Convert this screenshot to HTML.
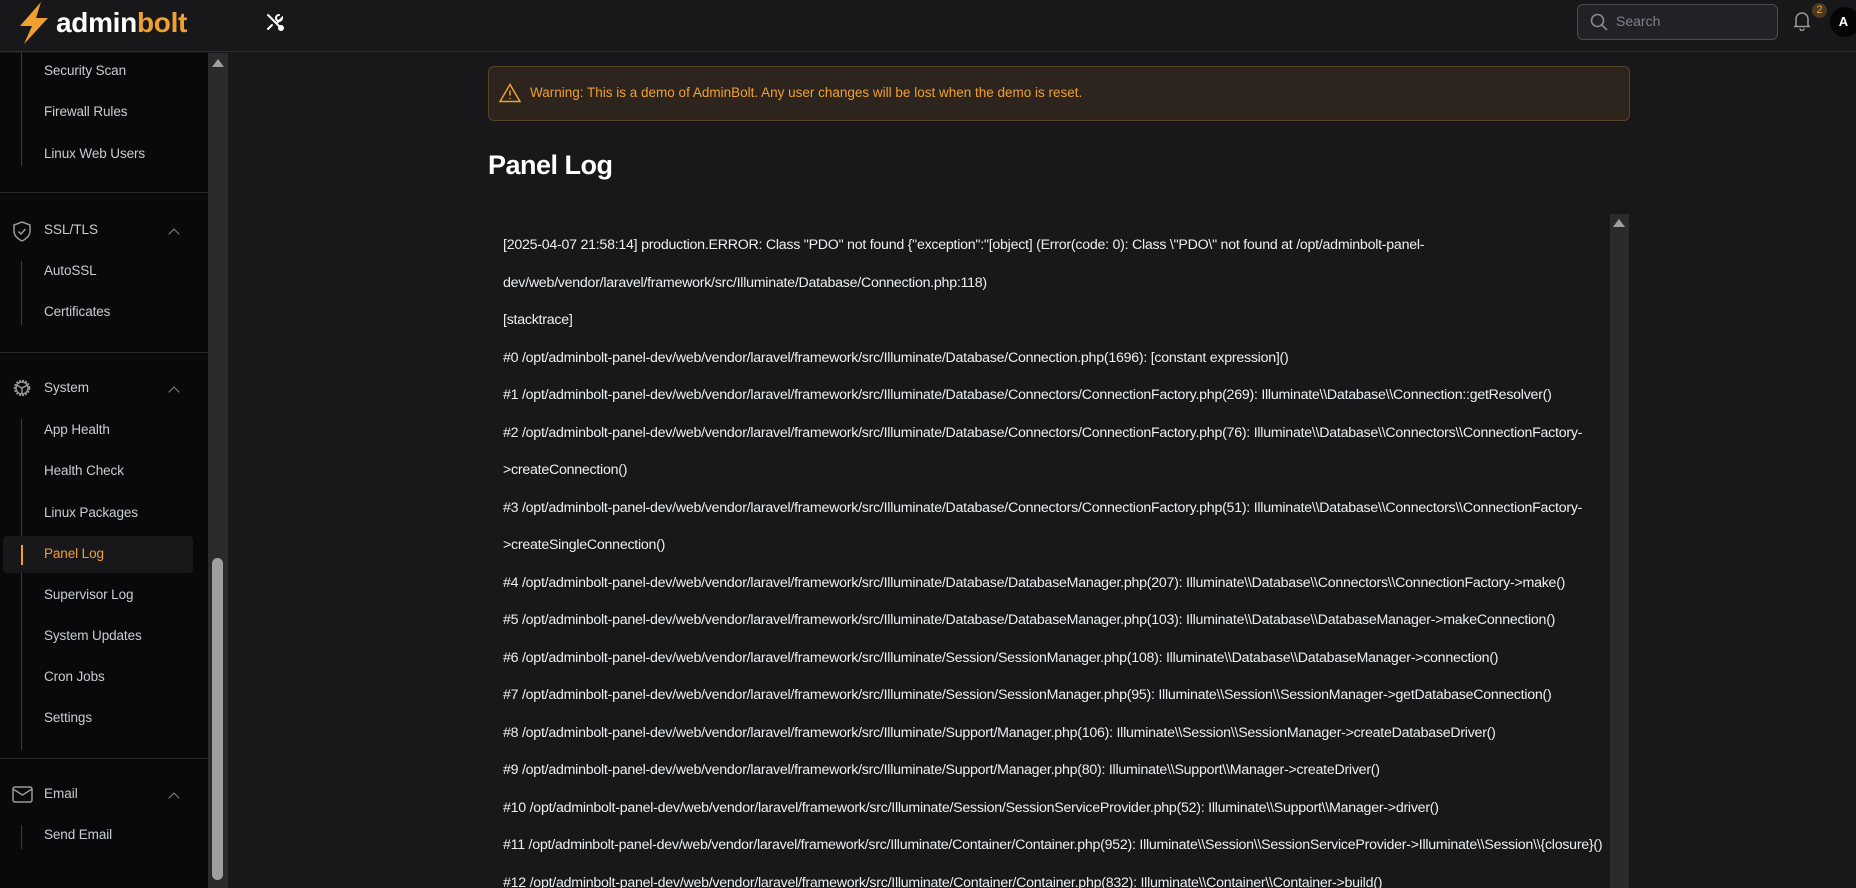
<!DOCTYPE html>
<html><head><meta charset="utf-8"><style>
*{box-sizing:border-box;margin:0;padding:0}
html,body{width:1856px;height:888px;overflow:hidden}
body{background:#18181b;font-family:"Liberation Sans",sans-serif;position:relative}
.hdr{position:absolute;left:0;top:0;width:1856px;height:52px;background:#18181b;border-bottom:1px solid #2e2e33}
.side{position:absolute;left:0;top:53px;width:208px;height:835px;background:#09090b}
.strk{position:absolute;left:208px;top:53px;width:20px;height:835px;background:#2b2b2b}
.thumb{position:absolute;left:212px;top:558px;width:11px;height:322px;background:#9f9f9f;border-radius:6px}
.tri{position:absolute;width:0;height:0;border-left:6px solid transparent;border-right:6px solid transparent;border-bottom:8px solid #a0a0a0}
.it{position:absolute;left:44px;font-size:13.5px;color:#c9ccd3;letter-spacing:-0.1px}
.grp{position:absolute;left:44px;font-size:13.5px;color:#c9ccd3}
.vl{position:absolute;left:21px;width:1px;background:#3a3a3f}
.hr{position:absolute;left:0;width:208px;height:1px;background:#26262b}
.chev{position:absolute;left:170px;width:8px;height:8px;border-left:1.5px solid #888;border-top:1.5px solid #888;transform:rotate(45deg)}
.log{position:absolute;left:503px;top:227px;font-size:14.2px;line-height:37.5px;color:#eceff3;white-space:nowrap;letter-spacing:-0.25px}
</style></head><body>
<div class="hdr">
<svg style="position:absolute;left:17px;top:2px" width="34" height="42" viewBox="0 0 34 42"><path d="M24 0 L3 24 L15 24 L7 42 L31 16 L19 16 Z" fill="#f0a030"/></svg>
<div style="position:absolute;left:56px;top:7px;font-size:28px;font-weight:bold;color:#fff;letter-spacing:-0.3px">admin<span style="color:#f0a030">bolt</span></div>
<svg style="position:absolute;left:265px;top:12px" width="20" height="20" viewBox="0 0 20 20" fill="none" stroke="#fff" stroke-width="2" stroke-linecap="round"><path d="M3 3 L17 17 M14 3 a3 3 0 1 0 3 3 L13 10 M3 17 l4-4"/><circle cx="16" cy="16" r="2"/></svg>
<div style="position:absolute;left:1577px;top:4px;width:201px;height:36px;border:1px solid #4a4a4f;border-radius:6px;background:#222226"></div>
<svg style="position:absolute;left:1590px;top:13px" width="18" height="18" viewBox="0 0 18 18" fill="none" stroke="#888" stroke-width="1.6"><circle cx="7.5" cy="7.5" r="6"/><path d="M12 12 L17 17"/></svg>
<div style="position:absolute;left:1616px;top:13px;font-size:14px;color:#7e8290">Search</div>
<svg style="position:absolute;left:1793px;top:11px" width="18" height="20" viewBox="0 0 18 20" fill="none" stroke="#999" stroke-width="1.5"><path d="M3 14 V8 a6 6 0 0 1 12 0 V14 L16 15.5 H2 Z M7 17.5 a2 2 0 0 0 4 0"/></svg>
<div style="position:absolute;left:1812px;top:3px;width:15px;height:15px;border-radius:50%;background:#4a3a22;color:#f0a030;font-size:11px;text-align:center;line-height:15px">2</div>
<div style="position:absolute;left:1830px;top:7px;width:30px;height:30px;border-radius:50%;background:#050505;color:#fff;font-size:13px;font-weight:bold;text-align:center;line-height:30px;text-indent:-3px">A</div>
</div>
<div class="side">
<div class="vl" style="top:0;height:113px"></div>
<div class="it" style="top:10px">Security Scan</div>
<div class="it" style="top:51px">Firewall Rules</div>
<div class="it" style="top:93px">Linux Web Users</div>
<div class="hr" style="top:139px"></div>
<svg style="position:absolute;left:12px;top:168px" width="20" height="21" viewBox="0 0 20 21" fill="none" stroke="#999" stroke-width="1.5"><path d="M10 1 L18 4 V10 C18 15 14 18 10 20 C6 18 2 15 2 10 V4 Z"/><path d="M6.5 10.5 L9 13 L13.5 8"/></svg>
<div class="grp" style="top:169px">SSL/TLS</div><div class="chev" style="top:177px"></div>
<div class="vl" style="top:208px;height:64px"></div>
<div class="it" style="top:210px">AutoSSL</div>
<div class="it" style="top:251px">Certificates</div>
<div class="hr" style="top:299px"></div>
<svg style="position:absolute;left:12px;top:325px" width="20" height="20" viewBox="0 0 20 20" fill="none" stroke="#999" stroke-width="1.5"><circle cx="10" cy="10" r="7.5" stroke-dasharray="2 1.2"/><circle cx="10" cy="10" r="6"/><path d="M10 10 L4.5 7 M10 10 L15.5 7 M10 10 V16"/></svg>
<div class="grp" style="top:327px">System</div><div class="chev" style="top:335px"></div>
<div class="vl" style="top:366px;height:331px"></div>
<div class="it" style="top:369px">App Health</div>
<div class="it" style="top:410px">Health Check</div>
<div class="it" style="top:452px">Linux Packages</div>
<div style="position:absolute;left:3px;top:483px;width:190px;height:37px;background:#18181b;border-radius:4px"></div>
<div style="position:absolute;left:21px;top:492px;width:2px;height:20px;background:#f0a030"></div>
<div class="it" style="top:493px;color:#f0a030">Panel Log</div>
<div class="it" style="top:534px">Supervisor Log</div>
<div class="it" style="top:575px">System Updates</div>
<div class="it" style="top:616px">Cron Jobs</div>
<div class="it" style="top:657px">Settings</div>
<div class="hr" style="top:705px"></div>
<svg style="position:absolute;left:12px;top:733px" width="21" height="17" viewBox="0 0 21 17" fill="none" stroke="#999" stroke-width="1.5"><rect x="1" y="1" width="19" height="15" rx="2"/><path d="M1 3 L10.5 9 L20 3"/></svg>
<div class="grp" style="top:733px">Email</div><div class="chev" style="top:741px"></div>
<div class="vl" style="top:772px;height:24px"></div>
<div class="it" style="top:774px">Send Email</div>
</div>
<div class="strk"></div><div class="tri" style="left:212px;top:59px"></div><div class="thumb"></div>
<div style="position:absolute;left:488px;top:66px;width:1142px;height:55px;background:#2d241e;border:1px solid #5a4428;border-radius:6px"></div>
<svg style="position:absolute;left:499px;top:83px" width="22" height="20" viewBox="0 0 22 20" fill="none" stroke="#f0a030" stroke-width="1.5"><path d="M11 1.5 L21 18.5 H1 Z M11 7.5 V12.5 M11 15 V16"/></svg>
<div style="position:absolute;left:530px;top:85px;font-size:13.5px;color:#f0a030">Warning: This is a demo of AdminBolt. Any user changes will be lost when the demo is reset.</div>
<div style="position:absolute;left:488px;top:150px;font-size:27px;font-weight:bold;color:#fff;letter-spacing:-0.5px">Panel Log</div>
<div style="position:absolute;left:488px;top:212px;width:1142px;height:676px;background:#18181b;overflow:hidden">
<div style="position:absolute;left:1122px;top:2px;width:19px;height:674px;background:#2b2b2b"></div>
<div class="tri" style="left:1125px;top:7px"></div>
</div>
<div class="log">
[2025-04-07 21:58:14] production.ERROR: Class "PDO" not found {"exception":"[object] (Error(code: 0): Class \"PDO\" not found at /opt/adminbolt-panel-<br>
dev/web/vendor/laravel/framework/src/Illuminate/Database/Connection.php:118)<br>
[stacktrace]<br>
#0 /opt/adminbolt-panel-dev/web/vendor/laravel/framework/src/Illuminate/Database/Connection.php(1696): [constant expression]()<br>
#1 /opt/adminbolt-panel-dev/web/vendor/laravel/framework/src/Illuminate/Database/Connectors/ConnectionFactory.php(269): Illuminate\\Database\\Connection::getResolver()<br>
#2 /opt/adminbolt-panel-dev/web/vendor/laravel/framework/src/Illuminate/Database/Connectors/ConnectionFactory.php(76): Illuminate\\Database\\Connectors\\ConnectionFactory-<br>
&gt;createConnection()<br>
#3 /opt/adminbolt-panel-dev/web/vendor/laravel/framework/src/Illuminate/Database/Connectors/ConnectionFactory.php(51): Illuminate\\Database\\Connectors\\ConnectionFactory-<br>
&gt;createSingleConnection()<br>
#4 /opt/adminbolt-panel-dev/web/vendor/laravel/framework/src/Illuminate/Database/DatabaseManager.php(207): Illuminate\\Database\\Connectors\\ConnectionFactory-&gt;make()<br>
#5 /opt/adminbolt-panel-dev/web/vendor/laravel/framework/src/Illuminate/Database/DatabaseManager.php(103): Illuminate\\Database\\DatabaseManager-&gt;makeConnection()<br>
#6 /opt/adminbolt-panel-dev/web/vendor/laravel/framework/src/Illuminate/Session/SessionManager.php(108): Illuminate\\Database\\DatabaseManager-&gt;connection()<br>
#7 /opt/adminbolt-panel-dev/web/vendor/laravel/framework/src/Illuminate/Session/SessionManager.php(95): Illuminate\\Session\\SessionManager-&gt;getDatabaseConnection()<br>
#8 /opt/adminbolt-panel-dev/web/vendor/laravel/framework/src/Illuminate/Support/Manager.php(106): Illuminate\\Session\\SessionManager-&gt;createDatabaseDriver()<br>
#9 /opt/adminbolt-panel-dev/web/vendor/laravel/framework/src/Illuminate/Support/Manager.php(80): Illuminate\\Support\\Manager-&gt;createDriver()<br>
#10 /opt/adminbolt-panel-dev/web/vendor/laravel/framework/src/Illuminate/Session/SessionServiceProvider.php(52): Illuminate\\Support\\Manager-&gt;driver()<br>
#11 /opt/adminbolt-panel-dev/web/vendor/laravel/framework/src/Illuminate/Container/Container.php(952): Illuminate\\Session\\SessionServiceProvider-&gt;Illuminate\\Session\\{closure}()<br>
#12 /opt/adminbolt-panel-dev/web/vendor/laravel/framework/src/Illuminate/Container/Container.php(832): Illuminate\\Container\\Container-&gt;build()
</div>
</body></html>
